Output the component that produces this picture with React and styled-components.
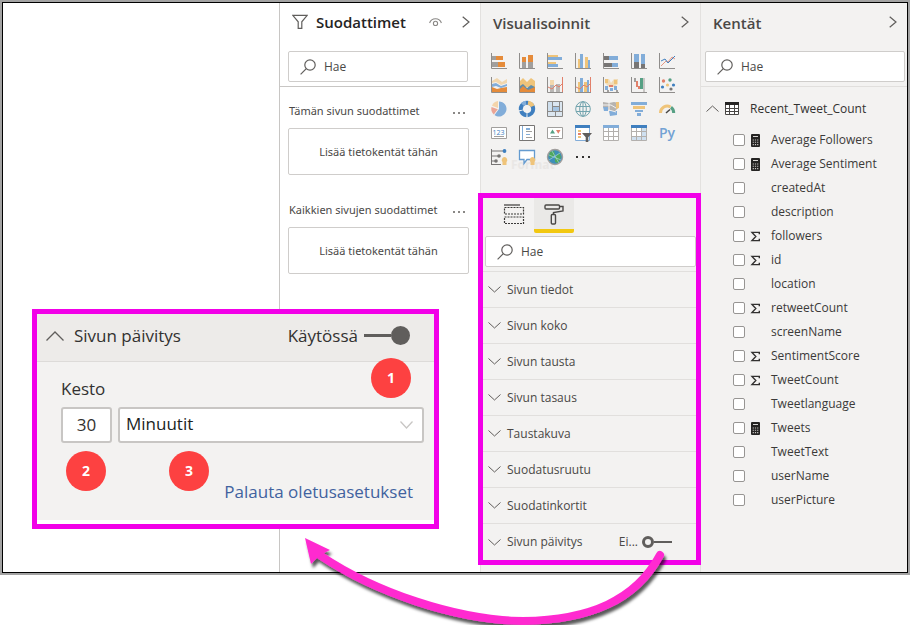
import React from "react";
import styled, { createGlobalStyle } from "styled-components";

const GlobalStyle = createGlobalStyle`
  *, *::before, *::after { box-sizing: border-box; }
  body { margin: 0; background: #fff; }
  body, input, select, button {
    font-family: "Open Sans", "Noto Sans", sans-serif;
    font-size: 12px;
    line-height: 16px;
    color: #4a4846;
  }
`;

const Page = styled.div`
  position: relative;
  padding-bottom: 50px;
  overflow: hidden;
`;

const WindowFrame = styled.main`
  display: grid;
  grid-template-columns: 1fr 201px 220px 207px;
  border: 1px solid #000;
  outline: 2px solid #a3a3a3;
  margin: 2px;
`;

const Canvas = styled.section`
  background: #fff;
`;

const Panel = styled.section`
  background: ${(p) => (p.$plain ? "#fff" : "#f3f2f1")};
  border-left: 1px solid ${(p) => (p.$plain ? "#c8c6c4" : "#e3e1df")};
  min-width: 0;
`;

const PanelHeader = styled.header`
  display: flex;
  align-items: center;
  gap: 8px;
  height: ${(p) => (p.$tall ? "46px" : "38px")};
  padding: 0 ${(p) => (p.$tall ? "11px 8px" : "10px 0")} 12px;
`;

const PanelTitle = styled.h2`
  margin: 0;
  padding-top: ${(p) => (p.$dark ? "0" : "2px")};
  flex: 1;
  font-size: 15px;
  line-height: 20px;
  font-weight: 600;
  color: ${(p) => (p.$dark ? "#252423" : "#4a4846")};
`;

const IconButton = styled.button`
  display: flex;
  padding: 0;
  border: 0;
  background: none;
  cursor: pointer;
`;

const HeaderActions = styled.div`
  display: flex;
  align-items: center;
  gap: 20px;
`;

const SearchArea = styled.div`
  padding: 10px ${(p) => (p.$wide ? 2 : 12)}px 4px ${(p) => (p.$wide ? 4 : 8)}px;
  border-bottom: 1px solid ${(p) => (p.$wide ? "#e1dfdd" : "#c8c6c4")};
`;

const SearchBox = styled.label`
  display: flex;
  align-items: center;
  gap: 8px;
  height: 31px;
  padding-left: 11px;
  background: #fff;
  border: 1px solid #cfcdcb;
  border-radius: 2px;
`;

const SearchInput = styled.input`
  flex: 1;
  min-width: 0;
  border: 0;
  padding: 0;
  background: none;
  outline: none;
  &::placeholder { color: #4a4846; opacity: 1; }
`;

const FilterGroup = styled.div`
  display: grid;
  gap: 5px;
  padding: 12px 11px 11px 8px;
  font-family: "Noto Sans", "Open Sans", sans-serif;
  font-size: 11px;
`;

const FilterLabel = styled.div`
  display: flex;
  align-items: center;
  justify-content: space-between;
  height: 24px;
  padding: 0 3px 0 1px;
`;

const FilterTitle = styled.h3`
  margin: 0;
  font-size: 11px;
  font-weight: 400;
  white-space: nowrap;
`;

const DropZone = styled.div`
  display: flex;
  align-items: center;
  justify-content: center;
  height: 47px;
  border: 1px solid #cfcdcb;
  border-radius: 2px;
  background: #fff;
`;

const VisualGrid = styled.div`
  position: relative;
  display: grid;
  grid-template-columns: repeat(7, 28px);
  grid-auto-rows: 24px;
  padding: 0 4px;
  margin-bottom: 24px;
`;

const VisualButton = styled(IconButton)`
  z-index: 1;
  align-items: center;
  justify-content: center;
  font-size: 14px;
  font-weight: 600;
  color: #73a2d4;
`;

const FadingTip = styled.span`
  position: absolute;
  left: 30px;
  top: 108px;
  font-weight: 700;
  color: #e9e7e5;
`;

const Highlight = styled.div`
  position: relative;
  z-index: 1;
  margin: 0 -1px 7px -3px;
  border: 5px solid #f200e8;
  background: #f3f2f1;
`;

const Tabs = styled.div`
  display: flex;
  padding-left: 11px;
`;

const Tab = styled.button`
  display: flex;
  align-items: flex-start;
  justify-content: center;
  width: 40px;
  height: 35px;
  padding: 6px 0 0;
  border: 0;
  background: ${(p) => (p.$active ? "#eae9e7" : "none")};
  border-bottom: 4px solid ${(p) => (p.$active ? "#f2c811" : "transparent")};
  border-radius: 0 0 2px 2px;
`;

const FormatSearch = styled.div`
  padding: 3px 0 4px 2px;
`;

const FormatRow = styled.div`
  display: flex;
  align-items: center;
  height: 36px;
  padding: 0 24px 0 5px;
  border-top: 1px solid #e1dfdd;
  &:last-child { height: 37px; }
`;

const ExpandButton = styled(IconButton)`
  flex: 1;
  align-items: center;
  gap: ${(p) => (p.$large ? "10px" : "6px")};
  font-size: ${(p) => (p.$large ? "17px" : "12px")};
  line-height: 24px;
  color: ${(p) => (p.$large ? "#323130" : "#4a4846")};
`;

const ToggleLabel = styled.label`
  display: flex;
  align-items: center;
  gap: ${(p) => (p.$large ? "6px" : "4px")};
  font-size: ${(p) => (p.$large ? "17px" : "12px")};
`;

const Switch = styled.input.attrs({ type: "checkbox", role: "switch" })`
  appearance: none;
  display: flex;
  align-items: center;
  margin: 0;
  width: ${(p) => (p.$large ? "46px" : "30px")};
  flex-direction: row;
  &::before {
    content: "";
    width: 12px;
    height: 12px;
    border: 3px solid #605e5c;
    border-radius: 50%;
  }
  &::after {
    content: "";
    flex: 1;
    height: ${(p) => (p.$large ? "3px" : "2px")};
    background: #605e5c;
  }
  &:checked { flex-direction: row-reverse; }
  &:checked::before {
    width: 19px;
    height: 19px;
    background: #605e5c;
  }
`;

const TableHeading = styled.div`
  display: flex;
  align-items: center;
  height: 31px;
  margin-top: 6px;
  padding-left: 5px;
  gap: 6px;
`;

const TableName = styled.span`
  padding-left: 5px;
  color: #323130;
`;

const FieldList = styled.ul`
  list-style: none;
  margin: 4px 0 0;
  padding: 0 0 0 32px;
`;

const FieldRow = styled.label`
  display: grid;
  grid-template-columns: 12px 11px 1fr;
  column-gap: 5px;
  align-items: center;
  height: 24px;
`;

const FieldCheck = styled.input.attrs({ type: "checkbox" })`
  appearance: none;
  margin: 0;
  width: 12px;
  height: 12px;
  border: 1px solid #979593;
  border-radius: 2px;
  background: #fff;
  &:checked { background: #605e5c; }
`;

const FieldName = styled.span`
  padding-left: 5px;
  color: #3b3a39;
`;

const Callout = styled.section`
  position: absolute;
  top: 309px;
  right: 471px;
  width: 407px;
  padding-bottom: 4px;
  border: 5px solid #f200e8;
  background: #fff;
  color: #323130;
`;

const CalloutHeader = styled.div`
  display: flex;
  align-items: center;
  height: 48px;
  padding: 0 24px 4px 9px;
  background: #edebe9;
  border-bottom: 1px solid #dddbd9;
`;

const CalloutBody = styled.div`
  display: grid;
  gap: 6px;
  padding: 15px 10px 16px 24px;
  background: #f3f2f1;
`;

const DurationLabel = styled.label`
  font-size: 17px;
  line-height: 24px;
`;

const DurationFields = styled.div`
  display: flex;
  gap: 6px;
`;

const fieldStyle = `
  height: 36px;
  background-color: #fff;
  border: 2px solid #c8c6c4;
  border-radius: 3px;
  font-size: 17px;
  line-height: 24px;
`;

const DurationInput = styled.input`
  ${fieldStyle}
  width: 51px;
  text-align: center;
  padding: 0 4px 2px;
  color: #323130;
`;

const SelectWrap = styled.div`
  display: grid;
  flex: 1;
  align-items: center;
  & > * { grid-area: 1 / 1; }
  & > svg { justify-self: end; margin-right: 11px; pointer-events: none; }
`;

const UnitSelect = styled.select`
  ${fieldStyle}
  appearance: none;
  width: 100%;
  padding: 0 6px 2px;
  color: #201f1e;
`;

const ResetLink = styled.a`
  justify-self: end;
  margin: 31px 11px 0 0;
  font-size: 17px;
  line-height: 24px;
  color: #41629f;
  text-decoration: none;
`;

const Badge = styled.span`
  position: absolute;
  left: ${(p) => p.$x}px;
  top: ${(p) => p.$y}px;
  display: flex;
  align-items: center;
  justify-content: center;
  width: 40px;
  height: 40px;
  border-radius: 50%;
  background: #fd4141;
  color: #fff;
  font-size: 14px;
  font-weight: 700;
`;

const ArrowOverlay = styled.svg`
  position: absolute;
  z-index: 2;
  right: 230px;
  top: 526px;
  pointer-events: none;
`;

const Chevron = ({ dir = "down", w = 13, h = 7, color = "#605e5c", sw = 1 }) => {
  const d = {
    down: `M.5 .5L${w / 2} ${h - 1}L${w - 0.5} .5`,
    up: `M.5 ${h - 0.5}L${w / 2} 1L${w - 0.5} ${h - 0.5}`,
    right: `M.7 .7L${w - 1} ${h / 2}L.7 ${h - 0.7}`,
  }[dir];
  return (
    <svg width={w} height={h} fill="none" stroke={color} strokeWidth={sw} aria-hidden="true">
      <path d={d} />
    </svg>
  );
};

const SearchIcon = () => (
  <svg width="16" height="16" fill="none" stroke="#605e5c" strokeWidth="1.2" aria-hidden="true">
    <circle cx="10" cy="6" r="5.2" />
    <path d="M6.3 9.7L.6 15.4" />
  </svg>
);

const FunnelIcon = () => (
  <svg width="16" height="16" fill="none" stroke="#605e5c" strokeWidth="1.2" aria-hidden="true">
    <path d="M.8 1.3h14.4L9.8 7.8v6.6H6.2V7.8z" />
  </svg>
);

const EyeIcon = () => (
  <svg width="13" height="9" fill="none" stroke="#8a8886" strokeWidth="1.1" aria-hidden="true">
    <path d="M.6 5C2.5-.6 10.5-.6 12.4 5" />
    <circle cx="6.5" cy="5.4" r="2.1" />
  </svg>
);

const TableIcon = () => (
  <svg width="14" height="13" aria-hidden="true">
    <path fill="#fff" d="M0 0h14v13H0z" />
    <path fill="#252423" d="M0 0h14v3H0z" />
    <path fill="none" stroke="#484644" d="M.5 3v9.5h13V3M4.5 3v9.5M9.5 3v9.5M.5 6.5h13M.5 9.5h13" />
  </svg>
);

const CalculatorIcon = () => (
  <svg width="11" height="13" aria-hidden="true">
    <rect x="1" y="0" width="9" height="13" rx="1" fill="#252423" />
    <path fill="#d8d6d4" d="M3 2h5v1H3z" />
    <path stroke="#c8c6c4" strokeWidth="1.1" strokeDasharray="1.2 1" d="M2.7 6h5.8M2.7 8.3h5.8M2.7 10.6h5.8" />
  </svg>
);

const SigmaIcon = () => (
  <svg width="11" height="11" fill="none" stroke="#323130" strokeWidth="1.4" aria-hidden="true">
    <path d="M9.3 3.2V1.4H2L5.8 5.5L2 9.6h7.3V7.8" />
  </svg>
);

const FieldsTabIcon = () => (
  <svg width="22" height="22" fill="none" stroke="#3b3a39" strokeWidth="1.2" aria-hidden="true">
    <path d="M1 1h16" />
    <path strokeDasharray="2 1" d="M1.5 3.5h19v6.5h-19zM1.5 13h19v6.5h-19z" />
  </svg>
);

const RollerIcon = () => (
  <svg width="20" height="22" fill="none" stroke="#4a4846" strokeWidth="1.4" aria-hidden="true">
    <rect x="1" y="1" width="14.5" height="4" rx="1" />
    <path d="M15.5 2.5H19V7L9.5 8.5V10.5" />
    <rect x="7.3" y="10.5" width="4.2" height="9.5" rx="1" />
  </svg>
);

const O = "#e58b3a";
const G = "#a19f9d";
const D = "#777574";
const B = "#82add9";
const Y = "#efc47a";
const N = "#3f7fbf";
const R = "#e2806a";
const T = "#56a084";

const Axis = () => <path d="M1.5 1v15.5H17" fill="none" stroke="#8f8d8b" />;
const Bars = ({ items }) => items.map(([x, y, w, h, c], i) => <rect key={i} x={x} y={y} width={w} height={h} fill={c} />);

const visuals = [
  ["Pinottu palkkikaavio", <><Bars items={[[2, 4, 4, 4, G], [6, 4, 7, 4, O], [2, 10, 6, 5, G], [8, 10, 7, 5, O]]} /><Axis /></>],
  ["Pinottu pylväskaavio", <><Bars items={[[4, 5, 4, 5, O], [4, 10, 4, 6, G], [10, 3, 5, 7, O], [10, 10, 5, 6, G]]} /><Axis /></>],
  ["Ryhmitelty palkkikaavio", <><Bars items={[[2, 3, 10, 2, Y], [2, 5, 14, 3, B], [2, 10, 8, 2, Y], [2, 12, 10, 3, B]]} /><Axis /></>],
  ["Ryhmitelty pylväskaavio", <><Bars items={[[4, 7, 2, 9, Y], [6, 2, 3, 14, B], [11, 5, 3, 11, Y], [14, 8, 2, 8, B]]} /><Axis /></>],
  ["100 % palkkikaavio", <><Bars items={[[2, 4, 5, 4, D], [7, 4, 9, 4, B], [2, 11, 8, 4, D], [10, 11, 6, 4, B]]} /><Axis /></>],
  ["100 % pylväskaavio", <><Bars items={[[4, 2, 5, 8, B], [4, 10, 5, 6, D], [11, 2, 4, 10, B], [11, 12, 4, 4, D]]} /><Axis /></>],
  ["Viivakaavio", <><path d="M3 14L8 9l2 1 4-5 3 2" fill="none" stroke={R} strokeWidth=".8" /><path d="M3 9l4-2 3 4 7-7" fill="none" stroke={N} /><Axis /></>],
  ["Aluekaavio", <><path fill={O} d="M2 11l5 2 4-1 6-1v5H2z" /><path fill={B} d="M2 8l4-1 5 3 6-2v2l-6 2-5-2-4 1z" /><path fill="#f2d7ad" d="M2 5l5-3 5 4 5-3v4l-6 2-5-3-4 1z" /><Axis /></>],
  ["Pinottu aluekaavio", <><path fill={Y} d="M2 5l3-3 4 4 4-4 4 3v6H2z" /><path fill="#618da8" d="M2 10l3-2 4 4 4-3 4 2v6H2z" /><path fill={O} d="M2 13l3-3 5 4 7-3v6H2z" /><Axis /></>],
  ["Viiva- ja pinottu pylväskaavio", <><Bars items={[[4, 4, 4, 5, "#f2d7ad"], [4, 9, 4, 7, "#b9b7b5"], [10, 8, 4, 8, "#b9b7b5"]]} /><path d="M2 11l4 2 4-4 3 2 4-4M16.5 1v15" fill="none" stroke={R} /><Axis /></>],
  ["Viiva- ja ryhmitelty pylväskaavio", <><Bars items={[[4, 6, 2, 10, Y], [6, 2, 3, 14, B], [10, 6, 3, 10, Y], [13, 4, 2, 12, B]]} /><path d="M2 11l4 2 4-4 3 2 4-4M16.5 1v15" fill="none" stroke={R} /><Axis /></>],
  ["Valintanauhakaavio", <><path fill="#f0dcb8" d="M3 3h4l2 4 3-4h4v5l-4 3H7L3 7z" /><Bars items={[[3, 3, 3, 4, Y], [3, 10, 3, 4, B], [7, 9, 4, 2, R], [8, 12, 3, 3, B], [12, 4, 3, 4, Y], [12, 10, 3, 4, B], [5, 14, 2, 2, G], [14, 14, 2, 2, G]]} /><Axis /></>],
  ["Vesiputouskaavio", <><Bars items={[[4, 2, 2, 4, G], [6, 5, 2, 6, R], [8, 10, 2, 3, R], [10, 2, 3, 11, T], [13, 2, 2, 14, "#c8c6c4"]]} /><Axis /></>],
  ["Pistekaavio", <><Axis /><circle cx="5.5" cy="5" r="1.7" fill={R} /><circle cx="12" cy="4" r="1.7" fill={T} /><circle cx="4.5" cy="11" r="1.6" fill={N} /><circle cx="9.5" cy="9" r="1.6" fill={Y} /><circle cx="15.5" cy="9" r="1.6" fill={N} /><circle cx="13" cy="13" r="1.6" fill={D} /></>],
  ["Ympyräkaavio", <><path fill={B} d="M9 9V1.5a7.5 7.5 0 1 1-4.5 13.5z" /><path fill="#f4d4aa" d="M8 8V1A7.5 7.5 0 0 0 2 5.7z" /><path fill="#eba596" d="M7.8 9.2L1.5 7a7.5 7.5 0 0 0 2.3 7.4z" /></>],
  ["Rengaskaavio", <g fill="none" strokeWidth="4"><circle cx="9" cy="9" r="6.2" stroke={N} strokeDasharray="9 1 7 1 8 1 4 1" /><path stroke={Y} d="M10 2.8a6 6 0 0 1 4.6 3.5" /><path stroke={B} d="M4.5 4.7A6 6 0 0 1 8 2.8" /></g>],
  ["Puukartta", <><path fill="#dbe6f0" d="M1.5 1.5h15v15h-15z" /><Bars items={[[2, 2, 4, 9, "#cfdfed"], [6, 7, 7, 4, "#a5c4e2"]]} /><path fill="none" stroke="#8a8886" d="M1.5 1.5h15v15h-15zM6.5 1.5v10M1.5 11.5h15M6.5 6.5h7M13.5 1.5v10M9.5 11.5v5" /></>],
  ["Kartta", <g fill="none" stroke="#72a4ae"><circle cx="9" cy="9" r="7.3" /><ellipse cx="9" cy="9" rx="3.3" ry="7.3" /><path d="M9 1.7v14.6M2 6.5h14M2 11.5h14" /></g>],
  ["Täytetty kartta", <><path fill="#b6b3b0" d="M1 2l6 1 5-1 5 1-1 5-3 3H9L5 9 1 7z" /><path fill={Y} d="M14 2h3v6l-3 1z" /><path fill={B} d="M1 7h5v4H2zM7 11h8v4l-7 1z" /><path stroke="#f3f2f1" fill="none" d="M1 5h8l5 3M7 3v7l7 2" /></>],
  ["Suppilo", <Bars items={[[1, 2, 16, 3, B], [3, 6, 12, 3, Y], [5, 10, 8, 2, B], [7, 13, 4, 3, B]]} />],
  ["Mittari", <g fill="none" strokeWidth="3"><path stroke={Y} d="M2.5 13a6.7 6.7 0 0 1 10-6" /><path stroke={T} d="M13 7.3a7 7 0 0 1 2.7 5.7" /><path stroke="#484644" strokeWidth="1.5" d="M8 13l4-3.5" /></g>],
  ["Kortti", <><path fill="#fff" stroke={G} d="M1.5 3.5h15v11h-15z" /><text x="2.5" y="10.5" fontSize="7" fontWeight="400" fill={N}>123</text><path stroke={G} d="M4 12.5h10" /></>],
  ["Monirivinen kortti", <><path fill="#fff" stroke={D} d="M1.5 1.5h15v15h-15z" /><path fill={B} d="M4 2h1v14H4zM8 4h4v2H8zM8 10h4v1H8z" /><path stroke={G} d="M8 7.5h6M8 13.5h6" /></>],
  ["KPI", <><path fill="#fff" stroke={G} d="M1.5 3.5h15v11h-15z" /><path fill={T} d="M4 9.5l2.5-4 2.5 4z" /><path fill={R} d="M10 6h4.5l-2.2 3.7z" /><path stroke={G} d="M5 12.5h8" /></>],
  ["Osittaja", <><path fill="#fff" stroke={B} d="M1.5 2.5h14v14h-14z" /><path fill={N} d="M1 1h15v3H1z" /><Bars items={[[4, 6, 3, 2, Y], [4, 9, 3, 2, R], [4, 12, 3, 2, Y]]} /><path fill="#605e5c" d="M8 9h10l-3.7 4.2V18h-2.6v-4.8z" /></>],
  ["Taulukko", <><path fill="#fff" stroke="#b3b0ad" d="M1.5 2.5h15v14h-15zM6.5 3v13M11.5 3v13M1.5 7.5h15M1.5 12.5h15" /><path fill={B} d="M1 1h16v3H1z" /></>],
  ["Matriisi", <><path fill="#cfe0f0" stroke="#b3b0ad" d="M1.5 2.5h15v14h-15z" /><path fill="#fff" d="M2 4h9v8H2z" /><path fill="none" stroke="#b3b0ad" d="M6.5 3v13M11.5 3v13M1.5 7.5h15M1.5 12.5h15" /><path fill={N} d="M1 1h16v3H1z" /></>],
  ["Python", null],
  ["Tärkeimmät vaikuttajat", <><path d="M1.5 1v16M2 3h12M2 8h7M2 13h5M1 16.5h10" fill="none" stroke={D} /><circle cx="14.5" cy="3" r="1.9" fill={N} /><circle cx="9" cy="8" r="1.8" fill={D} /><circle cx="6" cy="13" r="1.8" fill={D} /><path fill={Y} d="M14.5 9a3 3 0 0 1 2 5v3h-4v-3a3 3 0 0 1 2-5z" /></>],
  ["Q&A", <><path fill="#fff" stroke="#649bd0" strokeWidth="1.3" d="M1.5 2.5h15v9H9l-3 4v-4H1.5z" /><path fill={Y} d="M14.5 9a3 3 0 0 1 2 5v3h-4v-3a3 3 0 0 1 2-5z" /></>],
  ["ArcGIS", <><circle cx="9" cy="9" r="7.5" fill="#3d8fb8" stroke={G} strokeWidth="1.4" /><path fill="#4ea85d" d="M4 4l4-1 1 4-4 3-2-2zM9 9l4-4 2 4-3 6-3-1z" /><path stroke="#b9dfe5" strokeWidth=".6" fill="none" d="M3 7l12 5M6 3l7 12M3 12l11-7" /></>],
  ["Lisää", <path fill="#323130" d="M2 8h2v2H2zM8 8h2v2H8zM14 8h2v2h-2z" />],
];

const formatRows = ["Sivun tiedot", "Sivun koko", "Sivun tausta", "Sivun tasaus", "Taustakuva", "Suodatusruutu", "Suodatinkortit", "Sivun päivitys"];

const fields = [
  ["Average Followers", "calc"], ["Average Sentiment", "calc"], ["createdAt"], ["description"],
  ["followers", "sum"], ["id", "sum"], ["location"], ["retweetCount", "sum"], ["screenName"],
  ["SentimentScore", "sum"], ["TweetCount", "sum"], ["Tweetlanguage"], ["Tweets", "calc"],
  ["TweetText"], ["userName"], ["userPicture"],
];

const Search = () => (
  <SearchBox>
    <SearchIcon />
    <SearchInput type="text" placeholder="Hae" aria-label="Hae" />
  </SearchBox>
);

const FilterSection = ({ title }) => (
  <FilterGroup>
    <FilterLabel>
      <FilterTitle>{title}</FilterTitle>
      <IconButton aria-label="Lisää vaihtoehtoja">
        <svg width="13" height="8" fill="#8a8886"><path d="M0 5h2v2H0zM5 5h2v2H5zM10 5h2v2h-2z" /></svg>
      </IconButton>
    </FilterLabel>
    <DropZone>Lisää tietokentät tähän</DropZone>
  </FilterGroup>
);

const FiltersPanel = () => (
  <Panel $plain>
    <PanelHeader>
      <FunnelIcon />
      <PanelTitle $dark>Suodattimet</PanelTitle>
      <HeaderActions>
        <IconButton aria-label="Näytä"><EyeIcon /></IconButton>
        <IconButton aria-label="Kutista"><Chevron dir="right" w={8} h={12} sw={1.2} /></IconButton>
      </HeaderActions>
    </PanelHeader>
    <SearchArea><Search /></SearchArea>
    <FilterSection title="Tämän sivun suodattimet" />
    <FilterSection title="Kaikkien sivujen suodattimet" />
  </Panel>
);

const VisualizationsPanel = () => (
  <Panel>
    <PanelHeader $tall>
      <PanelTitle>Visualisoinnit</PanelTitle>
      <IconButton aria-label="Kutista"><Chevron dir="right" w={8} h={12} sw={1.2} /></IconButton>
    </PanelHeader>
    <VisualGrid>
      <FadingTip aria-hidden="true">Format</FadingTip>
      {visuals.map(([name, art]) => (
        <VisualButton key={name} aria-label={name}>
          {art ? <svg width="18" height="18">{art}</svg> : "Py"}
        </VisualButton>
      ))}
    </VisualGrid>
    <Highlight>
      <Tabs>
        <Tab aria-label="Kentät"><FieldsTabIcon /></Tab>
        <Tab $active aria-label="Muotoilu"><RollerIcon /></Tab>
      </Tabs>
      <FormatSearch><Search /></FormatSearch>
      {formatRows.map((name, i) => (
        <FormatRow key={name}>
          <ExpandButton><Chevron />{name}</ExpandButton>
          {i === formatRows.length - 1 && (
            <ToggleLabel>Ei...<Switch aria-label="Sivun päivitys" /></ToggleLabel>
          )}
        </FormatRow>
      ))}
    </Highlight>
  </Panel>
);

const FieldsPanel = () => (
  <Panel>
    <PanelHeader>
      <PanelTitle>Kentät</PanelTitle>
      <IconButton aria-label="Kutista"><Chevron dir="right" w={8} h={12} sw={1.2} /></IconButton>
    </PanelHeader>
    <SearchArea $wide><Search /></SearchArea>
    <TableHeading>
      <IconButton aria-label="Kutista taulukko"><Chevron dir="up" /></IconButton>
      <TableIcon />
      <TableName>Recent_Tweet_Count</TableName>
    </TableHeading>
    <FieldList>
      {fields.map(([name, kind]) => (
        <li key={name}>
          <FieldRow>
            <FieldCheck />
            {kind === "calc" ? <CalculatorIcon /> : kind === "sum" ? <SigmaIcon /> : <span />}
            <FieldName>{name}</FieldName>
          </FieldRow>
        </li>
      ))}
    </FieldList>
  </Panel>
);

const RefreshCallout = () => (
  <Callout>
    <CalloutHeader>
      <ExpandButton $large><Chevron dir="up" w={18} h={10} sw={1.3} />Sivun päivitys</ExpandButton>
      <ToggleLabel $large>Käytössä<Switch $large defaultChecked /></ToggleLabel>
    </CalloutHeader>
    <CalloutBody>
      <DurationLabel htmlFor="duration">Kesto</DurationLabel>
      <DurationFields>
        <DurationInput id="duration" type="text" defaultValue="30" />
        <SelectWrap>
          <UnitSelect aria-label="Yksikkö"><option>Minuutit</option></UnitSelect>
          <Chevron color="#c8c6c4" sw={1.3} h={8} />
        </SelectWrap>
      </DurationFields>
      <ResetLink href="#reset">Palauta oletusasetukset</ResetLink>
    </CalloutBody>
    <Badge $x={334} $y={44}>1</Badge>
    <Badge $x={29} $y={137}>2</Badge>
    <Badge $x={132} $y={137}>3</Badge>
  </Callout>
);

const Arrow = () => (
  <ArrowOverlay width="380" height="100" viewBox="300 526 380 100" aria-hidden="true">
    <defs>
      <filter id="arrow-shadow" x="-10%" y="-20%" width="120%" height="150%">
        <feDropShadow dx="2" dy="4" stdDeviation="1.5" floodColor="#000" floodOpacity=".65" />
      </filter>
    </defs>
    <g filter="url(#arrow-shadow)">
      <path d="M660 555C636 600 590 620 523 621C455 620 375 592 321 556" fill="none" stroke="#ff2bd0" strokeWidth="8" strokeLinecap="round" />
      <path d="M305 538L330 550L320 555L311 564z" fill="#ff2bd0" />
    </g>
  </ArrowOverlay>
);

export default function App() {
  return (
    <>
      <GlobalStyle />
      <Page>
        <WindowFrame>
          <Canvas aria-label="Raporttipohja" />
          <FiltersPanel />
          <VisualizationsPanel />
          <FieldsPanel />
        </WindowFrame>
        <RefreshCallout />
        <Arrow />
      </Page>
    </>
  );
}
